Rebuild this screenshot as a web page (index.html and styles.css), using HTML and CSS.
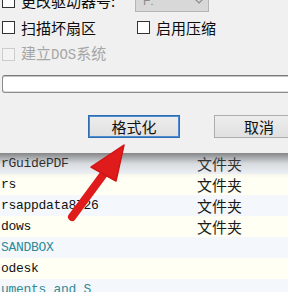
FILE: index.html
```html
<!DOCTYPE html>
<html>
<head>
<meta charset="utf-8">
<link rel="stylesheet" href="styles.css">
</head>
<body>
<div class="dialog">
  <div class="row r1">
    <label class="opt col1"><span class="cb"></span><span>更改驱动器号:</span></label>
    <div class="combo"><span>F:</span><svg width="8" height="5" viewBox="0 0 8 5"><path d="M0.5 0.5 L4 4 L7.5 0.5" fill="none" stroke="#8a8a8a" stroke-width="1.2"/></svg></div>
  </div>
  <div class="row r2">
    <label class="opt col1"><span class="cb"></span><span>扫描坏扇区</span></label>
    <label class="opt"><span class="cb"></span><span>启用压缩</span></label>
  </div>
  <div class="row r3">
    <label class="opt col1 disabled"><span class="cb"></span><span>建立<span class="lat">DOS</span>系统</span></label>
  </div>
  <div class="progress"></div>
  <div class="buttons">
    <button class="btn default">格式化</button>
    <button class="btn cancel">取消</button>
  </div>
</div>
<div class="list">
  <div class="item"><span class="name">rGuidePDF</span><span class="type">文件夹</span></div>
  <div class="item"><span class="name">rs</span><span class="type">文件夹</span></div>
  <div class="item"><span class="name">rsappdata8726</span><span class="type">文件夹</span></div>
  <div class="item"><span class="name">dows</span><span class="type">文件夹</span></div>
  <div class="item"><span class="name teal">SANDBOX</span></div>
  <div class="item"><span class="name">odesk</span></div>
  <div class="item"><span class="name teal">uments and S</span></div>
</div>
<svg class="arrow" width="288" height="292" viewBox="0 0 288 292">
  <line x1="106" y1="171" x2="72" y2="217" stroke="#e01b1b" stroke-width="8" stroke-linecap="round"/>
  <polygon points="124,145 91,167 116,181" fill="#e01b1b" stroke="#d01515" stroke-width="1.5" stroke-linejoin="round"/>
</svg>
</body>
</html>
```
FILE: styles.css
```css
html, body {
  margin: 0;
  padding: 0;
}
body {
  width: 288px;
  height: 292px;
  overflow: hidden;
  background: #ffffff;
  font-family: "Noto Sans CJK SC", sans-serif;
  position: relative;
}
.dialog {
  background: #f0f0f0;
  height: 153px;
  display: flex;
  flex-direction: column;
  overflow: hidden;
}
.row {
  display: flex;
  align-items: center;
  height: 26px;
  flex: none;
  padding-left: 2px;
}
.r1 { margin-top: -12px; }
.r2 { height: 27px; }
.opt {
  display: flex;
  align-items: center;
  font-size: 15px;
  line-height: 18px;
  color: #0d0d0d;
  white-space: nowrap;
}
.col1 { width: 135px; flex: none; }
.cb {
  width: 11px;
  height: 11px;
  border: 1px solid #333333;
  background: #ffffff;
  margin-right: 6px;
  flex: none;
}
.disabled { color: #a6a6a6; }
.disabled .cb {
  border-color: #cccccc;
  background: #f3f3f3;
}
.lat {
  font-family: "Liberation Mono", monospace;
  font-size: 14px;
}
.combo {
  margin-left: -2px;
  width: 74px;
  height: 22px;
  box-sizing: border-box;
  border: 1px solid #b5b5b5;
  background: #d8d8d8;
  display: flex;
  align-items: center;
  justify-content: space-between;
  padding: 0 5px 0 7px;
  color: #8a8a8a;
  font-family: "Liberation Sans", sans-serif;
  font-size: 12px;
}
.progress {
  flex: none;
  margin: 8px 0 0 2px;
  width: 300px;
  height: 18px;
  box-sizing: border-box;
  border: 1px solid #8c8c8c;
  border-top-color: #7a7a7a;
  border-radius: 3px;
  background: #ffffff;
  box-shadow: inset 0 1px 0 #c4c4c4, inset 0 -1px 0 #dcdcdc;
}
.buttons {
  flex: none;
  display: flex;
  gap: 34px;
  padding-left: 88px;
  margin-top: 22px;
}
.btn {
  flex: none;
  width: 92px;
  height: 23px;
  box-sizing: border-box;
  border: 1px solid #adadad;
  background: linear-gradient(#ededed, #e0e0e0);
  font-family: "Noto Sans CJK SC", sans-serif;
  font-size: 15px;
  line-height: 1;
  color: #111111;
  padding: 0;
  display: flex;
  align-items: center;
  justify-content: center;
}
.btn.default {
  border-color: #2f6db0;
  box-shadow: inset 0 0 0 1px #4b8dd0;
}
.btn.cancel { width: 90px; }
.list {
  position: relative;
}
.list::before {
  content: "";
  position: absolute;
  left: 0;
  right: 0;
  top: 0;
  height: 24px;
  background: linear-gradient(rgba(70,70,70,0.6), rgba(130,130,130,0.25) 40%, rgba(255,255,255,0));
  border-top: 1px solid #8a8a8a;
}
.item {
  display: flex;
  align-items: center;
  height: 21px;
}
.item:nth-child(odd) { background: #f4f8fd; }
.item:nth-child(even) { background: #fffff3; }
.name {
  width: 196px;
  flex: none;
  padding-left: 1px;
  font-family: "Liberation Mono", monospace;
  font-size: 13px;
  letter-spacing: -0.3px;
  line-height: 21px;
  color: #111111;
  white-space: nowrap;
  overflow: hidden;
}
.teal { color: #2f8a96; }
.type {
  font-size: 15px;
  line-height: 21px;
  color: #1a1a1a;
}
.arrow {
  position: absolute;
  left: 0;
  top: 0;
  pointer-events: none;
}
```
